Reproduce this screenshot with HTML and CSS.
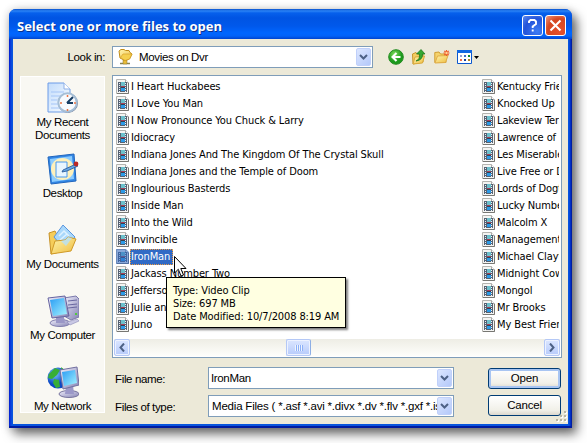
FILE: index.html
```html
<!DOCTYPE html>
<html lang="en">
<head>
<meta charset="utf-8">
<title>Select one or more files to open</title>
<link rel="stylesheet" href="styles.css">
</head>
<body>
<svg class="defs" width="0" height="0" aria-hidden="true">
  <defs>
    <linearGradient id="gold" x1="0" y1="0" x2="1" y2="1"><stop offset="0" stop-color="#fff6b0"/><stop offset="1" stop-color="#eebc3e"/></linearGradient>
    <linearGradient id="screen" x1="0" y1="0" x2="1" y2="1"><stop offset="0" stop-color="#2b9df4"/><stop offset="1" stop-color="#a5f3ff"/></linearGradient>
    <linearGradient id="metal" x1="0" y1="0" x2="1" y2="1"><stop offset="0" stop-color="#f0effc"/><stop offset="1" stop-color="#8583b4"/></linearGradient>
    <linearGradient id="paper" x1="0" y1="0" x2="1" y2="1"><stop offset="0" stop-color="#c2dcfc"/><stop offset="1" stop-color="#fafdff"/></linearGradient>
    <radialGradient id="globe" cx=".35" cy=".3"><stop offset="0" stop-color="#7ec8ff"/><stop offset="1" stop-color="#0b48c4"/></radialGradient>
    <radialGradient id="green" cx=".4" cy=".3"><stop offset="0" stop-color="#7ddb5c"/><stop offset="1" stop-color="#1c9a1c"/></radialGradient>
    <symbol id="clip" viewBox="0 0 13 15">
      <path d="M.5.5H9.5L12.5 3.5V14.5H.5Z" fill="#f4f4f2" stroke="#b4b4b0"/>
      <path d="M12.5 4V14.5H1" fill="none" stroke="#777773"/>
      <path d="M9.5.5V3.5H12.5" fill="#fff" stroke="#aaa"/>
      <path d="M2 3H11V13H2Z" fill="#566273"/>
      <path d="M5 3H9V7H5Z" fill="#6cc0cc"/><path d="M5 7H9V8H5Z" fill="#a8405a"/>
      <path d="M5 8H9V9H5Z" fill="#34414e"/><path d="M5 9H9V12H5Z" fill="#2b9be8"/>
      <path d="M3.5 4V13M9.5 4V13" stroke="#edf1f5" stroke-dasharray="1 1"/>
    </symbol>
    <symbol id="chev" viewBox="0 0 9 6"><path d="M1 1L4.5 4.5L8 1" fill="none" stroke="#4d6185" stroke-width="2"/></symbol>
  </defs>
</svg>
<main class="window">
  <header class="titlebar">
    <h1 class="title">Select one or more files to open</h1>
    <button class="cap help" aria-label="Help"><svg width="19" height="19" viewBox="0 0 19 19"><path d="M6 7V5.5L7.5 4H11.5L13 5.5V8L9.7 10.5V12M9.7 13.5V15.5" fill="none" stroke="#fff" stroke-width="1.9"/></svg></button>
    <button class="cap close" aria-label="Close"><svg width="19" height="19" viewBox="0 0 19 19"><path d="M4.5 4.5L14.5 14.5M14.5 4.5L4.5 14.5" stroke="#fff" stroke-width="2.1"/></svg></button>
  </header>
  <div class="client">
    <div class="lookbar">
      <span class="looklabel">Look in:</span>
      <div class="combo look">
        <svg class="drive" width="16" height="16" viewBox="0 0 16 16"><path d="M2 14.5H12" stroke="#8b8350" stroke-width="1.5"/><path d="M5 11H9V15H5Z" fill="#e9bc38" stroke="#8f7a2c" stroke-width=".5"/><path d="M1 2L3 .5H6L7.5 1.5H11L12 3.5L14 5L11.5 10L7 11.5L2 9Z" fill="url(#gold)" stroke="#c18c18"/><path d="M2.5 8.5L5 5L14 5L11.5 10L7 11.5Z" fill="#f5d04f" stroke="#d6a02b" stroke-width=".7"/></svg>
        <span class="value">Movies on Dvr</span>
        <span class="drop"><svg width="9" height="6"><use href="#chev"/></svg></span>
      </div>
      <div class="tools">
        <svg width="16" height="16" viewBox="0 0 16 16"><circle cx="8" cy="8" r="7.3" fill="url(#green)" stroke="#258c22"/><path d="M8.5 4L4.5 8L8.5 12M5 8H12.5" fill="none" stroke="#fff" stroke-width="2.1"/></svg>
        <svg width="16" height="16" viewBox="0 0 16 16"><path d="M1.5 5L5 3.5L6.5 5L12 4.5V13L2 15Z" fill="#f5ce63" stroke="#c8952a"/><path d="M2 15L4 8L13.5 7L11.5 14Z" fill="url(#gold)" stroke="#d9a93b"/><path d="M5 12Q9.5 10 8.3 5H5.5L10 .5L14 5H11.5Q12 11 5 12Z" fill="#34a732" stroke="#147218" stroke-width=".7"/></svg>
        <svg width="16" height="16" viewBox="0 0 16 16"><path d="M.8 13.5V3.5L5 3L6.5 5H12V13.5Z" fill="#f5d36c" stroke="#cf9d32"/><path d="M1 14L3.5 7L14 6.5L11.5 13.5Z" fill="url(#gold)" stroke="#e0ad48"/><path d="M12.5 1V7M9.5 4H15.5M10.3 1.8L14.7 6.2M14.7 1.8L10.3 6.2" stroke="#ef5827" stroke-width="1.2"/><circle cx="12.5" cy="4" r="1.2" fill="#ffd596"/></svg>
        <svg width="23" height="16" viewBox="0 0 23 16"><path d="M.5 1.5H14.5V14.5H.5Z" fill="#fff" stroke="#0c58ce"/><path d="M0 1H15V4H0Z" fill="#1268e3"/><path d="M3 6H5V8H3Z" fill="#999ed1"/><path d="M7 6H9V8H7Z" fill="#3c6cca"/><path d="M11 6H13V8H11Z" fill="#15892a"/><path d="M3 10H5V12H3Z" fill="#f26b4b"/><path d="M7 10H9V12H7Z" fill="#173e9b"/><path d="M11 10H13V12H11Z" fill="#b68420"/><path d="M17 7H22L19.5 10Z" fill="#000"/></svg>
      </div>
    </div>
    <div class="middle">
      <nav class="places">
        <div class="place"><svg width="32" height="32" viewBox="0 0 32 32"><path d="M1 1H17L23 7V30H1Z" fill="url(#paper)" stroke="#6c9ce7"/><path d="M17 1V7H23" fill="#fff" stroke="#8eafe5"/><path d="M4 10H17M4 14H13M4 18H10M4 22H11M4 26H14" stroke="#a4c5f7"/><circle cx="21" cy="21" r="10" fill="#78849c"/><circle cx="20.5" cy="20.5" r="9.2" fill="#f7fafe" stroke="#a5bed6" stroke-width="2"/><path d="M20 21L26 15M20 21H26" stroke="#173d63" stroke-width="2"/><path d="M20.5 13V15M20.5 27V29M13 21H15M27 21H29" stroke="#ec7444" stroke-width="1.5"/></svg><span>My Recent<br>Documents</span></div>
        <div class="place"><svg width="32" height="32" viewBox="0 0 32 32"><path d="M1 4L27 1L29 28L4 31Z" fill="#3387e4" stroke="#2166be"/><path d="M3 6L25 3L27 26L5 29Z" fill="#8cccff"/><ellipse cx="15.5" cy="16" rx="11.5" ry="11" fill="#fff1bb"/><path d="M9 9H20V24H9Z" fill="#e8f6ff" stroke="#4898ed"/><path d="M16 17L29 11L31 13L20 18L15 19Z" fill="#67a9e6" stroke="#204e8e" stroke-width=".8"/><circle cx="29" cy="11" r="2.4" fill="#bb2925"/></svg><span>Desktop</span></div>
        <div class="place"><svg width="32" height="32" viewBox="0 0 32 32"><path d="M2 9L8 7L10 11L17 10V27L4 30Z" fill="#f5cd5a" stroke="#c79227"/><path d="M7 13L16 1L28 13L18 26Z" fill="#a9d8fb" stroke="#5a96de"/><path d="M12 12L17 7L22 12M13 16L20 10" fill="none" stroke="#dff2ff" stroke-width="1.5"/><path d="M4 30L8 17L18 16L21 13L29 15L24 27Z" fill="url(#gold)" stroke="#d09a27"/><path d="M14 17L19 22L25 14L21 13L18 16Z" fill="#b4e1fa" opacity=".8"/></svg><span>My Documents</span></div>
        <div class="place"><svg width="32" height="32" viewBox="0 0 32 32"><path d="M17 3L29 1L32 4V22L24 25L17 21Z" fill="url(#metal)" stroke="#7b79ab"/><path d="M21 6L30 5M21 10L30 9M21 13L30 12" stroke="#6967a0"/><path d="M28 18H30V20H28Z" fill="#53ca3b"/><ellipse cx="13" cy="28" rx="10" ry="3.5" fill="url(#metal)" stroke="#817eae"/><path d="M9 21L17 22L18 28H9Z" fill="#9a97c7"/><path d="M1 3L18 1L22 21L5 23Z" fill="url(#metal)" stroke="#6664a1"/><path d="M3 5L17 3L20 19L6 21Z" fill="url(#screen)"/><path d="M20 27L30 24L32 26L23 30Z" fill="#c9c8e4" stroke="#8c89b6" stroke-width=".6"/></svg><span>My Computer</span></div>
        <div class="place"><svg width="32" height="32" viewBox="0 0 32 32"><circle cx="11" cy="12" r="10.5" fill="url(#globe)"/><path d="M2 8L8 2L13 4L10 9L5 13L1 12ZM7 13L12 14L13 21L9 22L6 17ZM14 1L20 6L15 8Z" fill="#38ae37"/><ellipse cx="22" cy="28" rx="10" ry="3.5" fill="url(#metal)" stroke="#77749e"/><path d="M19 20L26 19L27 28H18Z" fill="#9b98c8"/><path d="M13 4L30 1L32 19L16 23Z" fill="url(#metal)" stroke="#716f9f"/><path d="M15 6L28 4L30 17L17 20Z" fill="url(#screen)"/></svg><span>My Network</span></div>
      </nav>
      <section class="listbox">
        <div class="columns">
          <ul class="files">
            <li><svg><use href="#clip"/></svg><span>I Heart Huckabees</span></li>
            <li><svg><use href="#clip"/></svg><span>I Love You Man</span></li>
            <li><svg><use href="#clip"/></svg><span>I Now Pronounce You Chuck &amp; Larry</span></li>
            <li><svg><use href="#clip"/></svg><span>Idiocracy</span></li>
            <li><svg><use href="#clip"/></svg><span>Indiana Jones And The Kingdom Of The Crystal Skull</span></li>
            <li><svg><use href="#clip"/></svg><span>Indiana Jones and the Temple of Doom</span></li>
            <li><svg><use href="#clip"/></svg><span>Inglourious Basterds</span></li>
            <li><svg><use href="#clip"/></svg><span>Inside Man</span></li>
            <li><svg><use href="#clip"/></svg><span>Into the Wild</span></li>
            <li><svg><use href="#clip"/></svg><span>Invincible</span></li>
            <li class="selected"><svg><use href="#clip"/><path d="M0 0H10L13 3V15H0Z" fill="#316ac5" opacity=".55"/></svg><span>IronMan</span></li>
            <li><svg><use href="#clip"/></svg><span>Jackass Number Two</span></li>
            <li><svg><use href="#clip"/></svg><span>Jefferson</span></li>
            <li><svg><use href="#clip"/></svg><span>Julie and</span></li>
            <li><svg><use href="#clip"/></svg><span>Juno</span></li>
          </ul>
          <ul class="files">
            <li><svg><use href="#clip"/></svg><span>Kentucky Fried</span></li>
            <li><svg><use href="#clip"/></svg><span>Knocked Up</span></li>
            <li><svg><use href="#clip"/></svg><span>Lakeview Terrace</span></li>
            <li><svg><use href="#clip"/></svg><span>Lawrence of</span></li>
            <li><svg><use href="#clip"/></svg><span>Les Miserables</span></li>
            <li><svg><use href="#clip"/></svg><span>Live Free or Die</span></li>
            <li><svg><use href="#clip"/></svg><span>Lords of Dogtown</span></li>
            <li><svg><use href="#clip"/></svg><span>Lucky Number</span></li>
            <li><svg><use href="#clip"/></svg><span>Malcolm X</span></li>
            <li><svg><use href="#clip"/></svg><span>Management</span></li>
            <li><svg><use href="#clip"/></svg><span>Michael Clayton</span></li>
            <li><svg><use href="#clip"/></svg><span>Midnight Cowboy</span></li>
            <li><svg><use href="#clip"/></svg><span>Mongol</span></li>
            <li><svg><use href="#clip"/></svg><span>Mr Brooks</span></li>
            <li><svg><use href="#clip"/></svg><span>My Best Friend</span></li>
          </ul>
        </div>
        <div class="scroll">
          <span class="arrow"><svg width="6" height="9" viewBox="0 0 6 9"><path d="M5 .5L1.5 4.5L5 8.5" fill="none" stroke="#4d6185" stroke-width="2"/></svg></span>
          <span class="thumb"></span>
          <span class="arrow"><svg width="6" height="9" viewBox="0 0 6 9"><path d="M1 .5L4.5 4.5L1 8.5" fill="none" stroke="#4d6185" stroke-width="2"/></svg></span>
        </div>
        <svg class="cursor" width="13" height="21" viewBox="0 0 13 21"><path d="M.5.5V17L4.3 13.3L7 20L9.5 19L6.8 12.5H12Z" fill="#fff" stroke="#000"/></svg>
        <div class="tooltip">Type: Video Clip<br>Size: 697 MB<br>Date Modified: 10/7/2008 8:19 AM</div>
      </section>
      <div class="form">
        <label>File name:</label>
        <div class="combo"><span class="value">IronMan</span><span class="drop"><svg width="9" height="6"><use href="#chev"/></svg></span></div>
        <button class="btn default">Open</button>
        <label>Files of type:</label>
        <div class="combo types"><span class="value">Media Files ( *.asf *.avi *.divx *.dv *.flv *.gxf *.iso</span><span class="drop"><svg width="9" height="6"><use href="#chev"/></svg></span></div>
        <button class="btn">Cancel</button>
      </div>
    </div>
    <svg class="grip" width="12" height="12" viewBox="0 0 12 12"><path d="M9 1H11V3H9ZM5 5H7V7H5ZM9 5H11V7H9ZM1 9H3V11H1ZM5 9H7V11H5ZM9 9H11V11H9Z" fill="#fff"/><path d="M8 0H10V2H8ZM4 4H6V6H4ZM8 4H10V6H8ZM0 8H2V10H0ZM4 8H6V10H4ZM8 8H10V10H8Z" fill="#b8b4a3"/></svg>
  </div>
</main>
</body>
</html>
```
FILE: styles.css
```css
* { box-sizing: border-box; }
html, body { margin: 0; height: 100%; overflow: hidden; background: #fff; }
body { padding: 9px; font: 11.5px/13px "Liberation Sans", sans-serif; letter-spacing: -.35px; color: #000; }
svg { display: block; flex: none; }
.defs { position: absolute; }
.window {
  width: 563px; height: 419px; padding: 0 4px 4px;
  border-radius: 7px 7px 0 0;
  background: linear-gradient(90deg, #0019cf 0, #0831d9 1px, #0855dd 3px, #0855dd 560px, #0038d8 561px, #001590 563px);
  box-shadow: inset 0 -2px #001ba0, 5px 6px 11px rgba(0,0,0,.55), 0 1px 10px rgba(0,0,0,.2);
}
.titlebar {
  height: 30px; margin: 0 -4px; padding: 1px 6px 0 8px;
  display: flex; align-items: center; gap: 2px;
  border-radius: 7px 7px 0 0;
  background: linear-gradient(#0851ce 0, #2a83f5 2px, #0660ec 4px, #0054e3 9px, #0058eb 17px, #0066ff 24px, #0262f8 27px, #0044cf 30px);
}
.title { flex: 1; margin: 3px 0 0; font: bold 13px/16px "Open Sans", sans-serif; letter-spacing: 0; color: #fff; text-shadow: 1px 1px #0a318e; white-space: nowrap; }
.cap { width: 21px; height: 21px; margin-top: 2px; padding: 0; border: 1px solid #fff; border-radius: 3px; }
.help { background: radial-gradient(circle at 75% 80%, #3d7cf5, #2454d9 60%, #5d8bf0); }
.close { background: radial-gradient(circle at 75% 80%, #e6502b, #d44721 60%, #f09a80); }
.client { position: relative; height: 385px; background: #ece9d8; }
.lookbar { height: 36px; padding-top: 7px; display: flex; align-items: flex-start; }
.looklabel { width: 99px; padding: 5px 7px 0 0; text-align: right; }
.combo { display: flex; align-items: center; width: 246px; height: 22px; padding: 1px; border: 1px solid #7f9db9; background: #fff; overflow: hidden; }
.look { width: 261px; }
.drive { margin-left: 4px; }
.value { flex: 1; min-width: 0; overflow: hidden; white-space: nowrap; padding-left: 1px; margin-top: 1px; }
.look .value { padding-left: 5px; }
.drop { flex: none; width: 15px; height: 18px; display: grid; place-items: center; border: 1px solid #c0d0fa; border-radius: 2px; background: linear-gradient(135deg, #dce6ff, #b4c9fa); }
.tools { display: flex; gap: 7px; margin: 3px 0 0 15px; }
.middle { display: grid; grid-template: 283px 54px / 85px 450px; column-gap: 7px; row-gap: 9px; padding-left: 7px; }
.places { grid-row: 1 / 3; height: 337px; margin-top: 1px; padding-top: 5px; background: #f9f8f3; border: 1px solid #fff; display: grid; grid-template-rows: 71px 71px 71px 71px 50px; }
.place { display: flex; flex-direction: column; align-items: center; gap: 2px; text-align: center; white-space: nowrap; }
.listbox { position: relative; border: 1px solid #7f9db9; background: #fff; display: flex; flex-direction: column; }
.columns { height: 263px; padding: 2px 2px 0 3px; display: grid; grid-template-columns: 366px 1fr; overflow: hidden; }
.files { list-style: none; margin: 0; padding: 0; min-width: 0; overflow: hidden; font: 11px/15px "DejaVu Sans Condensed", "DejaVu Sans", sans-serif; letter-spacing: -.1px; }
.files li { display: flex; height: 17px; align-items: center; white-space: nowrap; }
.files svg { width: 13px; height: 15px; }
.files span { padding: 0 1px; margin-left: 1px; height: 16px; }
.files .selected span { padding-right: 3px; background: #316ac5; color: #fff; outline: 1px dotted #ef9d43; outline-offset: -1px; }
.scroll { height: 17px; margin: 0 1px; display: flex; justify-content: space-between; background: linear-gradient(#eeede5, #fefefb); }
.arrow, .thumb { border: 1px solid #b4c8f6; border-radius: 2px; background: linear-gradient(#dbe6ff, #b7cbfb); box-shadow: inset 0 0 0 1px #edf2ff; display: grid; place-items: center; }
.arrow { width: 16px; }
.thumb { width: 25px; margin-right: 233px; margin-left: auto; border-right-color: #8daee5; }
.thumb::after { content: ""; width: 8px; height: 6px; background: repeating-linear-gradient(90deg, #eef4fe 0 1px, #8cb0f8 1px 2px); }
.cursor { position: absolute; left: 61px; top: 180px; }
.tooltip { position: absolute; left: 53px; top: 201px; width: 180px; height: 51px; padding: 6px 6px; border: 1px solid #000; background: #ffffe1; box-shadow: 2px 2px 2px rgba(0,0,0,.5); font: 11px/13px "DejaVu Sans Condensed", "DejaVu Sans", sans-serif; letter-spacing: -.12px; white-space: nowrap; }
.form { grid-column: 2; display: grid; grid-template-columns: 93px 246px 73px; row-gap: 6px; grid-template-rows: 22px 22px; padding-left: 3px; }
.form label { padding-top: 6px; }
.btn { width: 73px; height: 21px; margin: 1px 0 0 34px; padding: 0; border: 1px solid #003c74; border-radius: 3px; background: linear-gradient(#fff, #f1f0e8 75%, #dcd8ce); font: 11.5px/15px "Liberation Sans", sans-serif; letter-spacing: -.2px; }
.default { box-shadow: inset 0 0 0 2px #a8c5f2; }
.types .value { letter-spacing: -.2px; padding-left: 2px; }
.form .btn:last-child { margin-top: 0; }
.grip { position: absolute; right: 0; bottom: 1px; }
```
